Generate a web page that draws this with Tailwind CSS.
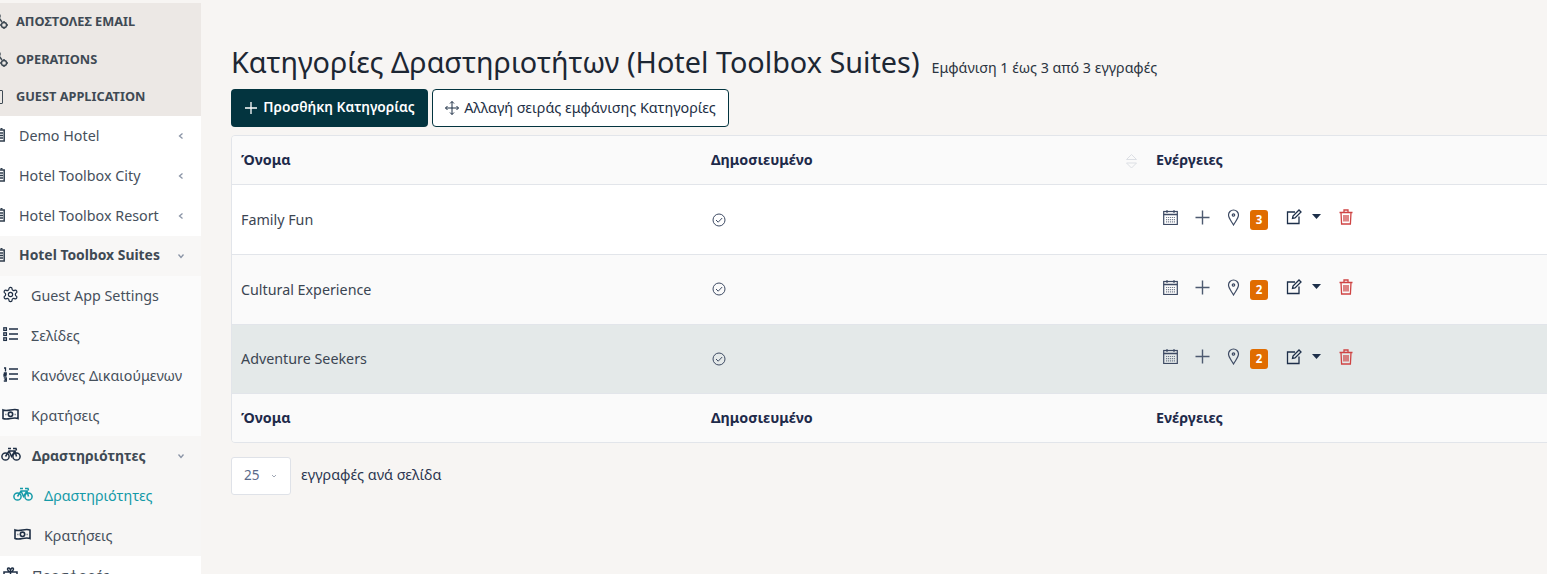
<!DOCTYPE html>
<html lang="en">
<head>
    <meta charset="UTF-8">
    <title>Κατηγορίες Δραστηριοτήτων</title>
    <script src="https://cdn.jsdelivr.net/npm/@tailwindcss/browser@4"></script>
</head>
<body class="bg-[#f7f5f3] h-[574px] w-[1547px] overflow-hidden flex font-['Noto_Sans',sans-serif] text-[#1e2a4a]">
    <!-- Sidebar -->
    <aside class="w-[201px] shrink-0 h-[574px] overflow-hidden pt-[3px] text-[14.3px] text-[#46505c]">
        <div class="bg-[#ece8e5] h-[113px] grid grid-rows-3 font-bold text-[12.75px] text-[#3f4a54]">
            <div class="flex items-center pl-[16px] relative">
                <svg class="absolute -left-[6px] top-[9px] w-[15px] h-[18px]" viewBox="0 0 15 18" fill="none" stroke="#3f4a54" stroke-width="1.5"><circle cx="4" cy="4" r="2"/><path d="M5 6l3 4"/><circle cx="10" cy="13" r="2.600"/><path d="M10 9v1.400M10 15.600V17M6 13h1.400M12.600 13H14"/></svg>
                ΑΠΟΣΤΟΛΕΣ EMAIL
            </div>
            <div class="flex items-center pl-[16px] relative">
                <svg class="absolute -left-[6px] top-[9px] w-[15px] h-[18px]" viewBox="0 0 15 18" fill="none" stroke="#3f4a54" stroke-width="1.5"><circle cx="4" cy="4" r="2"/><path d="M5 6l3 4"/><circle cx="10" cy="13" r="2.600"/><path d="M10 9v1.400M10 15.600V17M6 13h1.400M12.600 13H14"/></svg>
                OPERATIONS
            </div>
            <div class="flex items-center pl-[16px] pb-[2px] relative">
                <span class="absolute -left-[7px] top-[12px] w-[10px] h-[14px] border border-[#3f4a54] rounded-[1px]"></span>
                GUEST APPLICATION
            </div>
        </div>
        <div class="bg-white">
            <div class="h-[40px] flex items-center pl-[19px] pr-[16px] pb-[1px] justify-between relative">
                <svg class="absolute -left-[2px] top-[12px] w-[7px] h-[14px]" viewBox="0 0 7 14" fill="none" stroke="#2f3d4c" stroke-width="1.500"><rect x="0.800" y="2" width="5.400" height="11"/><path d="M2.500 .8h2M2 5h3M2 7.500h3M2 10h3"/></svg>
                <span>Demo Hotel</span>
                <svg class="w-[8px] h-[8px]" viewBox="0 0 8 8" fill="none" stroke="#8a94a6" stroke-width="1.300"><path d="M5.500 1.500L2.500 4l3 2.500"/></svg>
            </div>
            <div class="h-[40px] flex items-center pl-[19px] pr-[16px] pb-[1px] justify-between relative">
                <svg class="absolute -left-[2px] top-[12px] w-[7px] h-[14px]" viewBox="0 0 7 14" fill="none" stroke="#2f3d4c" stroke-width="1.500"><rect x="0.800" y="2" width="5.400" height="11"/><path d="M2.500 .8h2M2 5h3M2 7.500h3M2 10h3"/></svg>
                <span>Hotel Toolbox City</span>
                <svg class="w-[8px] h-[8px]" viewBox="0 0 8 8" fill="none" stroke="#8a94a6" stroke-width="1.300"><path d="M5.500 1.500L2.500 4l3 2.500"/></svg>
            </div>
            <div class="h-[40px] flex items-center pl-[19px] pr-[16px] pb-[1px] justify-between relative">
                <svg class="absolute -left-[2px] top-[12px] w-[7px] h-[14px]" viewBox="0 0 7 14" fill="none" stroke="#2f3d4c" stroke-width="1.500"><rect x="0.800" y="2" width="5.400" height="11"/><path d="M2.500 .8h2M2 5h3M2 7.500h3M2 10h3"/></svg>
                <span>Hotel Toolbox Resort</span>
                <svg class="w-[8px] h-[8px]" viewBox="0 0 8 8" fill="none" stroke="#8a94a6" stroke-width="1.300"><path d="M5.500 1.500L2.500 4l3 2.500"/></svg>
            </div>
        </div>
        <div class="bg-[#fbfbfb]">
            <div class="h-[40px] flex items-center pl-[19px] pr-[16px] pb-[1px] justify-between relative font-bold text-[13.9px] text-[#3f4a54] bg-[#f8f7f6]">
                <svg class="absolute -left-[2px] top-[12px] w-[7px] h-[14px]" viewBox="0 0 7 14" fill="none" stroke="#2f3d4c" stroke-width="1.500"><rect x="0.800" y="2" width="5.400" height="11"/><path d="M2.500 .8h2M2 5h3M2 7.500h3M2 10h3"/></svg>
                <span>Hotel Toolbox Suites</span>
                <svg class="w-[8px] h-[8px]" viewBox="0 0 8 8" fill="none" stroke="#8a94a6" stroke-width="1.300"><path d="M1.500 2.500L4 5.500l2.500-3"/></svg>
            </div>
            <div class="h-[40px] flex items-center pl-[31px] pb-[1px] relative">
                <svg class="absolute left-[2px] top-[10px] w-[17px] h-[17px]" viewBox="0 0 24 24" fill="none" stroke="#1f2f45" stroke-width="1.700"><path d="M12.220 2h-.44a2 2 0 0 0-2 2v.18a2 2 0 0 1-1 1.730l-.43.25a2 2 0 0 1-2 0l-.15-.08a2 2 0 0 0-2.730.73l-.22.38a2 2 0 0 0 .73 2.730l.15.1a2 2 0 0 1 1 1.720v.51a2 2 0 0 1-1 1.740l-.15.09a2 2 0 0 0-.73 2.730l.22.38a2 2 0 0 0 2.730.73l.15-.08a2 2 0 0 1 2 0l.43.25a2 2 0 0 1 1 1.730V20a2 2 0 0 0 2 2h.44a2 2 0 0 0 2-2v-.18a2 2 0 0 1 1-1.730l.43-.25a2 2 0 0 1 2 0l.15.08a2 2 0 0 0 2.730-.73l.22-.39a2 2 0 0 0-.73-2.730l-.15-.08a2 2 0 0 1-1-1.740v-.5a2 2 0 0 1 1-1.740l.15-.09a2 2 0 0 0 .73-2.730l-.22-.38a2 2 0 0 0-2.730-.73l-.15.08a2 2 0 0 1-2 0l-.43-.25a2 2 0 0 1-1-1.730V4a2 2 0 0 0-2-2z"/><circle cx="12" cy="12" r="3"/></svg>
                Guest App Settings
            </div>
            <div class="h-[40px] flex items-center pl-[31px] pb-[1px] relative">
                <svg class="absolute left-[3px] top-[11px] w-[15px] h-[15px]" viewBox="0 0 15 15" fill="none" stroke="#1f2f45" stroke-width="1.300"><rect x="0.800" y="0.800" width="2.600" height="2.600"/><rect x="0.800" y="5.800" width="2.600" height="2.600"/><rect x="0.800" y="10.800" width="2.600" height="2.600"/><path d="M6 2h9M6 7h9M6 12h9"/></svg>
                Σελίδες
            </div>
            <div class="h-[40px] flex items-center pl-[31px] pb-[1px] relative">
                <svg class="absolute left-[3px] top-[11px] w-[15px] h-[15px]" viewBox="0 0 15 15" fill="none" stroke="#1f2f45" stroke-width="1.300"><path d="M1 1h1.500v3.400M.8 6h2.400v1.500H1v1.500h2.500M.8 10.800h2.500v3.200H.8M1.500 12.400h1.800M6 2h9M6 7h9M6 12h9"/></svg>
                Κανόνες Δικαιούμενων
            </div>
            <div class="h-[40px] flex items-center pl-[31px] pb-[1px] relative">
                <svg class="absolute left-[2px] top-[12px] w-[17px] h-[13px]" viewBox="0 0 17 13" fill="none" stroke="#1f2f45" stroke-width="1.600"><path d="M1 2c5 2 10-2 15 0v8.500c-5-2-10 2-15 0z"/><circle cx="8.500" cy="6.300" r="2.200"/><path d="M3.500 6.500h.8M12.700 6.500h.8"/></svg>
                Κρατήσεις
            </div>
        </div>
        <div class="bg-[#f7f6f5]">
            <div class="h-[40px] flex items-center pl-[32px] pr-[16px] pb-[1px] justify-between relative font-bold text-[14px] text-[#3f4a54]">
                <svg class="absolute left-[1px] top-[10px] w-[20px] h-[16px]" viewBox="0 0 20 16" fill="none" stroke="#1f2f45" stroke-width="1.500"><circle cx="4.500" cy="10.500" r="3.600"/><circle cx="15.500" cy="10.500" r="3.600"/><path d="M4.500 10.500L8 5h6l1.500 5.500M8 5l2.500 5.500L14 5M7 2.500h3M12 2.500h3l.5 2"/></svg>
                <span>Δραστηριότητες</span>
                <svg class="w-[8px] h-[8px]" viewBox="0 0 8 8" fill="none" stroke="#8a94a6" stroke-width="1.300"><path d="M1.500 2.500L4 5.500l2.500-3"/></svg>
            </div>
            <div class="h-[40px] flex items-center pl-[44px] pb-[1px] relative text-[#149aa8]">
                <svg class="absolute left-[13px] top-[10px] w-[20px] h-[16px]" viewBox="0 0 20 16" fill="none" stroke="#149aa8" stroke-width="1.500"><circle cx="4.500" cy="10.500" r="3.600"/><circle cx="15.500" cy="10.500" r="3.600"/><path d="M4.500 10.500L8 5h6l1.500 5.500M8 5l2.500 5.500L14 5M7 2.500h3M12 2.500h3l.5 2"/></svg>
                Δραστηριότητες
            </div>
            <div class="h-[40px] flex items-center pl-[44px] pb-[1px] relative">
                <svg class="absolute left-[14px] top-[12px] w-[17px] h-[13px]" viewBox="0 0 17 13" fill="none" stroke="#1f2f45" stroke-width="1.600"><path d="M1 2c5 2 10-2 15 0v8.500c-5-2-10 2-15 0z"/><circle cx="8.500" cy="6.300" r="2.200"/><path d="M3.500 6.500h.8M12.700 6.500h.8"/></svg>
                Κρατήσεις
            </div>
        </div>
        <div class="bg-white h-[40px] flex items-center pl-[32px] pb-[1px] relative">
            <svg class="absolute left-[3px] top-[11px] w-[15px] h-[15px]" viewBox="0 0 15 15" fill="none" stroke="#1f2f45" stroke-width="1.500"><path d="M1 5h13v3H1zM2 8v6h11V8M7.500 5v9M7.500 5C5 5 3.500 1 5.500 1s2 4 2 4 0-4 2-4 .5 4-2 4"/></svg>
            Προσφορές
        </div>
    </aside>

    <!-- Main -->
    <main class="flex-1 min-w-0 pl-[30px] pt-[43px]">
        <div class="flex items-baseline gap-[12px] h-[39px] whitespace-nowrap">
            <h1 class="text-[28.8px] leading-[37px] text-[#1d2733]">Κατηγορίες Δραστηριοτήτων (Hotel Toolbox Suites)</h1>
            <span class="text-[14.25px] text-[#2b3440]">Εμφάνιση 1 έως 3 από 3 εγγραφές</span>
        </div>
        <div class="flex gap-[4px] mt-[7px]">
            <button class="h-[38px] w-[197px] bg-[#03343f] text-white rounded-[4px] flex items-center justify-center gap-[6px] text-[13.75px] font-semibold pb-[1px]">
                <svg class="w-[12px] h-[12px] ml-[1px]" viewBox="0 0 12 12" fill="none" stroke="white" stroke-width="1.300"><path d="M6 0v12M0 6h12"/></svg>
                Προσθήκη Κατηγορίας
            </button>
            <button class="h-[38px] w-[297px] bg-white border border-[#03343f] text-[#1d2f45] rounded-[4px] flex items-center justify-center gap-[5px] text-[14.35px] pb-[1px]">
                <svg class="w-[14px] h-[14px]" viewBox="0 0 14 14" fill="none" stroke="#1d2f45" stroke-width="1"><path d="M7 .5v13M.5 7h13M5 2.500L7 .5l2 2M5 11.500l2 2 2-2M2.500 5L.5 7l2 2M11.500 5l2 2-2 2"/></svg>
                Αλλαγή σειράς εμφάνισης Κατηγορίες
            </button>
        </div>
        <div class="mt-[8px] w-[1400px] rounded-[4px] border border-[#e2e5ea] overflow-hidden text-[14.3px]">
            <table class="w-full table-fixed border-collapse">
                <thead>
                    <tr class="bg-[#fafafa] h-[48px] border-b border-[#e2e5ea] text-left font-bold text-[#1e2a4a]">
                        <th class="w-[470px] pl-[9px]">Όνομα</th>
                        <th class="w-[445px] pl-[9px] relative">Δημοσιευμένο
                            <svg class="absolute right-[9px] top-[16px] w-[13px] h-[18px]" viewBox="0 0 13 18" fill="none" stroke="#dcdfe4" stroke-width="1"><path d="M1.500 7.500L6.500 2.500l5 5zM1.500 11l5 5 5-5z"/></svg>
                        </th>
                        <th class="pl-[9px]">Ενέργειες</th>
                    </tr>
                </thead>
                <tbody class="text-[#3b4552]">
                    <tr class="bg-white h-[70px] border-b border-[#e2e5ea]">
                        <td class="pl-[9px] pt-[2px]">Family Fun</td>
                        <td class="pl-[9px]"><svg class="w-[14px] h-[14px] ml-[1px] mt-[1px]" viewBox="0 0 14 14" fill="none" stroke="#3d4a63" stroke-width="1"><circle cx="7" cy="7" r="6"/><path d="M4 7l2.200 2.200L10.200 5"/></svg></td>
                        <td class="pl-[9px]">
                            <div class="flex items-center h-[20px] -mt-[4px] relative">
                                <svg class="w-[15px] h-[15px] ml-[7px]" viewBox="0 0 15 15" fill="none" stroke="#3d4a63" stroke-width="1.200"><rect x=".7" y="1.500" width="13.600" height="13"/><path d="M.7 4.500h13.600M4 .2v2.500M11 .2v2.500" stroke-width="1.500"/><path d="M3 7.500h9M3 9.700h9M3 11.900h9" stroke-dasharray="1.200 .8" stroke-opacity=".7"/></svg>
                                <svg class="w-[15px] h-[15px] ml-[17px]" viewBox="0 0 15 15" fill="none" stroke="#4d5a70" stroke-width="1.400"><path d="M7.500 .5v14M.5 7.500h14"/></svg>
                                <svg class="w-[13px] h-[17px] ml-[17px]" viewBox="0 0 13 17" fill="none" stroke="#3d4a63" stroke-width="1.200"><path d="M6.500 16C3.500 11 1.500 8.800 1.500 6a5 5 0 0 1 10 0c0 2.800-2 5-5 10z"/><circle cx="6.500" cy="6" r="1.200"/></svg>
                                <span class="ml-[10px] mt-[5px] w-[18px] h-[20px] rounded-[3px] bg-[#e06c00] text-white text-[11.5px] font-bold flex items-center justify-center">3</span>
                                <svg class="w-[16px] h-[16px] ml-[18px]" viewBox="0 0 16 16" fill="none" stroke="#1d2f4a" stroke-width="1.300"><path d="M9 3H1.500v11.500H13V7.500"/><path d="M6.500 9.500l.5-2.500 6-6 2 2-6 6z"/></svg>
                                <svg class="w-[9px] h-[5px] ml-[10px] -mt-[1px]" viewBox="0 0 9 5" fill="#1d2f4a"><path d="M0 0h9L4.500 5z"/></svg>
                                <svg class="w-[14px] h-[16px] ml-[18px]" viewBox="0 0 14 16" fill="none" stroke="#cf4444" stroke-width="1.300"><path d="M.5 3.500h13M2 3.500l.6 11.500h8.800l.6-11.500M5 3.500V1h4v2.500M5 6v6.500M7 6v6.500M9 6v6.500"/></svg>
                            </div>
                        </td>
                    </tr>
                    <tr class="bg-[#fafafa] h-[70px] border-b border-[#e2e5ea]">
                        <td class="pl-[9px] pt-[2px]">Cultural Experience</td>
                        <td class="pl-[9px]"><svg class="w-[14px] h-[14px] ml-[1px]" viewBox="0 0 14 14" fill="none" stroke="#3d4a63" stroke-width="1"><circle cx="7" cy="7" r="6"/><path d="M4 7l2.200 2.200L10.200 5"/></svg></td>
                        <td class="pl-[9px]">
                            <div class="flex items-center h-[20px] -mt-[4px] relative">
                                <svg class="w-[15px] h-[15px] ml-[7px]" viewBox="0 0 15 15" fill="none" stroke="#3d4a63" stroke-width="1.200"><rect x=".7" y="1.500" width="13.600" height="13"/><path d="M.7 4.500h13.600M4 .2v2.500M11 .2v2.500" stroke-width="1.500"/><path d="M3 7.500h9M3 9.700h9M3 11.900h9" stroke-dasharray="1.200 .8" stroke-opacity=".7"/></svg>
                                <svg class="w-[15px] h-[15px] ml-[17px]" viewBox="0 0 15 15" fill="none" stroke="#4d5a70" stroke-width="1.400"><path d="M7.500 .5v14M.5 7.500h14"/></svg>
                                <svg class="w-[13px] h-[17px] ml-[17px]" viewBox="0 0 13 17" fill="none" stroke="#3d4a63" stroke-width="1.200"><path d="M6.500 16C3.500 11 1.500 8.800 1.500 6a5 5 0 0 1 10 0c0 2.800-2 5-5 10z"/><circle cx="6.500" cy="6" r="1.200"/></svg>
                                <span class="ml-[10px] mt-[5px] w-[18px] h-[20px] rounded-[3px] bg-[#e06c00] text-white text-[11.5px] font-bold flex items-center justify-center">2</span>
                                <svg class="w-[16px] h-[16px] ml-[18px]" viewBox="0 0 16 16" fill="none" stroke="#1d2f4a" stroke-width="1.300"><path d="M9 3H1.500v11.500H13V7.500"/><path d="M6.500 9.500l.5-2.500 6-6 2 2-6 6z"/></svg>
                                <svg class="w-[9px] h-[5px] ml-[10px] -mt-[1px]" viewBox="0 0 9 5" fill="#1d2f4a"><path d="M0 0h9L4.500 5z"/></svg>
                                <svg class="w-[14px] h-[16px] ml-[18px]" viewBox="0 0 14 16" fill="none" stroke="#cf4444" stroke-width="1.300"><path d="M.5 3.500h13M2 3.500l.6 11.500h8.800l.6-11.500M5 3.500V1h4v2.500M5 6v6.500M7 6v6.500M9 6v6.500"/></svg>
                            </div>
                        </td>
                    </tr>
                    <tr class="bg-[#e4e9e9] h-[69px] border-b border-[#e2e5ea]">
                        <td class="pl-[9px]">Adventure Seekers</td>
                        <td class="pl-[9px]"><svg class="w-[14px] h-[14px] ml-[1px]" viewBox="0 0 14 14" fill="none" stroke="#3d4a63" stroke-width="1"><circle cx="7" cy="7" r="6"/><path d="M4 7l2.200 2.200L10.200 5"/></svg></td>
                        <td class="pl-[9px]">
                            <div class="flex items-center h-[20px] -mt-[4px] relative">
                                <svg class="w-[15px] h-[15px] ml-[7px]" viewBox="0 0 15 15" fill="none" stroke="#3d4a63" stroke-width="1.200"><rect x=".7" y="1.500" width="13.600" height="13"/><path d="M.7 4.500h13.600M4 .2v2.500M11 .2v2.500" stroke-width="1.500"/><path d="M3 7.500h9M3 9.700h9M3 11.900h9" stroke-dasharray="1.200 .8" stroke-opacity=".7"/></svg>
                                <svg class="w-[15px] h-[15px] ml-[17px]" viewBox="0 0 15 15" fill="none" stroke="#4d5a70" stroke-width="1.400"><path d="M7.500 .5v14M.5 7.500h14"/></svg>
                                <svg class="w-[13px] h-[17px] ml-[17px]" viewBox="0 0 13 17" fill="none" stroke="#3d4a63" stroke-width="1.200"><path d="M6.500 16C3.500 11 1.500 8.800 1.500 6a5 5 0 0 1 10 0c0 2.800-2 5-5 10z"/><circle cx="6.500" cy="6" r="1.200"/></svg>
                                <span class="ml-[10px] mt-[5px] w-[18px] h-[20px] rounded-[3px] bg-[#e06c00] text-white text-[11.5px] font-bold flex items-center justify-center">2</span>
                                <svg class="w-[16px] h-[16px] ml-[18px]" viewBox="0 0 16 16" fill="none" stroke="#1d2f4a" stroke-width="1.300"><path d="M9 3H1.500v11.500H13V7.500"/><path d="M6.500 9.500l.5-2.500 6-6 2 2-6 6z"/></svg>
                                <svg class="w-[9px] h-[5px] ml-[10px] -mt-[1px]" viewBox="0 0 9 5" fill="#1d2f4a"><path d="M0 0h9L4.500 5z"/></svg>
                                <svg class="w-[14px] h-[16px] ml-[18px]" viewBox="0 0 14 16" fill="none" stroke="#cf4444" stroke-width="1.300"><path d="M.5 3.500h13M2 3.500l.6 11.500h8.800l.6-11.500M5 3.500V1h4v2.500M5 6v6.500M7 6v6.500M9 6v6.500"/></svg>
                            </div>
                        </td>
                    </tr>
                </tbody>
                <tfoot>
                    <tr class="bg-[#fafafa] h-[49px] text-left font-bold text-[#1e2a4a]">
                        <th class="pl-[9px]">Όνομα</th>
                        <th class="pl-[9px]">Δημοσιευμένο</th>
                        <th class="pl-[9px]">Ενέργειες</th>
                    </tr>
                </tfoot>
            </table>
        </div>
        <div class="flex items-center gap-[10px] mt-[14px] text-[14.4px]">
            <div class="w-[60px] h-[38px] bg-white border border-[#dfe2e8] rounded-[3px] flex items-center pl-[12px] pb-[2px] gap-[12px] text-[#5a6a8a] text-[13.5px]">
                25
                <svg class="w-[6px] h-[6px] mt-[2px]" viewBox="0 0 6 6" fill="none" stroke="#a0a8b5" stroke-width="1"><path d="M1 2l2 2 2-2"/></svg>
            </div>
            <span class="text-[#2b3650] pb-[2px]">εγγραφές ανά σελίδα</span>
        </div>
    </main>
</body>
</html>
